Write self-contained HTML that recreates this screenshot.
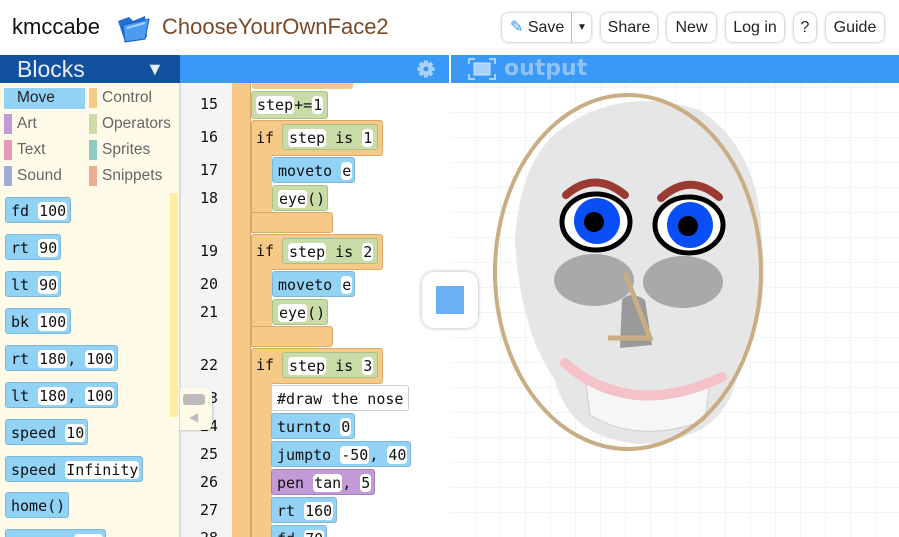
<!DOCTYPE html>
<html style="width:899px;height:537px;overflow:hidden"><head><meta charset="utf-8"><style>
*{margin:0;padding:0;box-sizing:border-box}
body{width:899px;height:537px;overflow:hidden;background:#fff;font-family:"Liberation Sans",sans-serif;position:relative}
.a{position:absolute}
.btn{position:absolute;top:13px;height:29px;border-radius:7px;background:#fff;box-shadow:0 0 3px rgba(0,0,0,.35);font-size:16px;color:#222;line-height:29px;text-align:center}
.m{font-family:"DejaVu Sans Mono","Liberation Mono",monospace;font-size:15px;color:#111}
.blk{position:absolute;height:26px;border-radius:3px;line-height:26px;padding-left:5px;white-space:nowrap}
.bl{background:#91d2f5;border:1px solid #7bb6d6}
.gr{background:#c9dba6;border:1px solid #abbf86}
.or{background:#f7c987;border:1px solid #d9aa66}
.pu{background:#c29bd6;border:1px solid #a47dbb}
.wh{background:#fff;border:1px solid #ccc}
.i{background:#fff;border-radius:4px;padding:0 1px}
.ln{position:absolute;left:180px;width:38px;text-align:right}
.cat{position:absolute;font-size:15.5px;color:#666;height:20px;line-height:20px}
.sw{position:absolute;width:8px;height:20px}
</style></head><body>
<div class="a" style="left:12px;top:14px;font-size:22px;color:#111">kmccabe</div>
<svg class="a" style="left:115px;top:11px" width="36" height="32" viewBox="0 0 36 32"><path d="M3 10 L14 6 L18 10 L30 5 L32 26 L10 31 Z" fill="#1f6fd6"/><path d="M8 14 L34 8 L30 28 L10 31 Z" fill="#4d9bf0" stroke="#1a5cb8" stroke-width="1"/><path d="M12 17 L30 12" stroke="#a9d4ff" stroke-width="2"/></svg>
<div class="a" style="left:162px;top:14px;font-size:22px;color:#7a4a28">ChooseYourOwnFace2</div>
<div class="btn" style="left:502px;width:89px;text-align:left;padding-left:8px"><span style="color:#3d8fe8">✎</span> Save<span class="a" style="left:69px;top:0;width:1px;height:29px;background:#bbb"></span><span class="a" style="left:75px;top:0;font-size:10px">▼</span></div>
<div class="btn" style="left:601px;width:56px">Share</div>
<div class="btn" style="left:667px;width:49px">New</div>
<div class="btn" style="left:726px;width:58px">Log in</div>
<div class="btn" style="left:794px;width:22px">?</div>
<div class="btn" style="left:826px;width:58px">Guide</div>

<div class="a" style="left:0;top:55px;width:180px;height:28px;background:#10509e;color:#e8eef8;font-size:23px;line-height:29px;padding-left:17px">Blocks<span class="a" style="left:146px;top:0;font-size:18px">▼</span></div>
<div class="a" style="left:180px;top:55px;width:269px;height:28px;background:#3a98f6"><svg class="a" style="left:237px;top:5px" width="18" height="18" viewBox="0 0 18 18"><g fill="#a9d2fb"><circle cx="9" cy="9" r="6.5"/><rect x="7" y="0.5" width="4" height="17"/><rect x="0.5" y="7" width="17" height="4"/><rect x="7" y="0.5" width="4" height="17" transform="rotate(45 9 9)"/><rect x="7" y="0.5" width="4" height="17" transform="rotate(-45 9 9)"/></g><circle cx="9" cy="9" r="2.5" fill="#3a98f6"/></svg></div>
<div class="a" style="left:451px;top:55px;width:448px;height:28px;background:#3a98f6"><svg class="a" style="left:17px;top:3px" width="28" height="22"><path d="M1 6V1h6M21 1h6v5M27 16v5h-6M7 21H1v-5" fill="none" stroke="#a9d2fb" stroke-width="2"/><rect x="6" y="5" width="16" height="12" fill="#a9d2fb" stroke="#d0e6fd"/></svg><span class="a" style="left:53px;top:0;font-size:22px;font-weight:bold;color:#8fc3f5;font-family:'DejaVu Sans',sans-serif;line-height:27px">output</span></div>

<div class="a" style="left:0;top:83px;width:180px;height:454px;background:#fffbe8;border-right:1px solid #ddd"></div>
<div class="a" style="left:4px;top:88px;width:81px;height:21px;background:#91d2f5"></div>
<div class="cat" style="left:17px;top:88px;color:#222">Move</div>
<div class="sw" style="left:89px;top:88px;background:#f7c987"></div><div class="cat" style="left:102px;top:88px">Control</div>
<div class="sw" style="left:4px;top:114px;background:#c29bd6"></div><div class="cat" style="left:17px;top:114px">Art</div>
<div class="sw" style="left:89px;top:114px;background:#c9dba6"></div><div class="cat" style="left:102px;top:114px">Operators</div>
<div class="sw" style="left:4px;top:140px;background:#e79ab8"></div><div class="cat" style="left:17px;top:140px">Text</div>
<div class="sw" style="left:89px;top:140px;background:#8fccc4"></div><div class="cat" style="left:102px;top:140px">Sprites</div>
<div class="sw" style="left:4px;top:166px;background:#9fabd6"></div><div class="cat" style="left:17px;top:166px">Sound</div>
<div class="sw" style="left:89px;top:166px;background:#f1ad94"></div><div class="cat" style="left:102px;top:166px">Snippets</div>
<div class="a" style="left:170px;top:193px;width:8px;height:224px;background:#ffeea0"></div>
<div class="m">
<div class="blk bl" style="left:5px;top:197px;width:66px">fd <span class="i">100</span></div>
<div class="blk bl" style="left:5px;top:234px;width:56px">rt <span class="i">90</span></div>
<div class="blk bl" style="left:5px;top:271px;width:56px">lt <span class="i">90</span></div>
<div class="blk bl" style="left:5px;top:308px;width:66px">bk <span class="i">100</span></div>
<div class="blk bl" style="left:5px;top:345px;width:113px">rt <span class="i">180</span>, <span class="i">100</span></div>
<div class="blk bl" style="left:5px;top:382px;width:113px">lt <span class="i">180</span>, <span class="i">100</span></div>
<div class="blk bl" style="left:5px;top:419px;width:83px">speed <span class="i">10</span></div>
<div class="blk bl" style="left:5px;top:456px;width:138px">speed <span class="i">Infinity</span></div>
<div class="blk bl" style="left:5px;top:492px;width:64px">home()</div>
<div class="blk bl" style="left:5px;top:529px;width:101px">turnto <span class="i">270</span></div>
</div>

<div class="a" style="left:180px;top:83px;width:52px;height:454px;background:#f4f4f4;border-left:1px solid #ddd"></div>
<div class="a" style="left:232px;top:83px;width:19px;height:454px;background:#f7c987;border-right:1px solid #d9aa66"></div>
<div class="a" style="left:252px;top:83px;width:101px;height:6px;background:#f7c987;border-radius:0 0 3px 3px"></div>
<div class="m">
<div class="ln" style="top:95px">15</div><div class="ln" style="top:128px">16</div><div class="ln" style="top:161px">17</div><div class="ln" style="top:189px">18</div>
<div class="ln" style="top:242px">19</div><div class="ln" style="top:275px">20</div><div class="ln" style="top:303px">21</div><div class="ln" style="top:356px">22</div>
<div class="ln" style="top:389px">23</div><div class="ln" style="top:417px">24</div><div class="ln" style="top:445px">25</div><div class="ln" style="top:473px">26</div><div class="ln" style="top:501px">27</div><div class="ln" style="top:529px">28</div>

<div class="blk gr" style="left:251px;top:91px;width:77px;height:28px;line-height:26px;padding-left:4px"><span class="i">step</span>+=<span class="i">1</span></div>

<div class="a or" style="left:251px;top:120px;width:132px;height:36px;border-radius:3px"></div>
<div class="a or" style="left:251px;top:150px;width:21px;height:66px;border-width:0 0 0 1px"></div>
<div class="a or" style="left:251px;top:212px;width:82px;height:21px;border-radius:0 3px 3px 0"></div>
<div class="a" style="left:256px;top:125px;line-height:26px">if</div>
<div class="blk gr" style="left:282px;top:124px;width:96px"><span class="i">step</span> is <span class="i">1</span></div>
<div class="blk bl" style="left:272px;top:157px;width:83px">moveto <span class="i">e</span></div>
<div class="blk gr" style="left:272px;top:185px;width:56px"><span class="i">eye</span>()</div>

<div class="a or" style="left:251px;top:234px;width:132px;height:36px;border-radius:3px"></div>
<div class="a or" style="left:251px;top:264px;width:21px;height:66px;border-width:0 0 0 1px"></div>
<div class="a or" style="left:251px;top:326px;width:82px;height:21px;border-radius:0 3px 3px 0"></div>
<div class="a" style="left:256px;top:238px;line-height:26px">if</div>
<div class="blk gr" style="left:282px;top:238px;width:96px"><span class="i">step</span> is <span class="i">2</span></div>
<div class="blk bl" style="left:272px;top:271px;width:83px">moveto <span class="i">e</span></div>
<div class="blk gr" style="left:272px;top:299px;width:56px"><span class="i">eye</span>()</div>

<div class="a or" style="left:251px;top:348px;width:132px;height:36px;border-radius:3px"></div>
<div class="a or" style="left:251px;top:378px;width:21px;height:159px;border-width:0 0 0 1px"></div>
<div class="a" style="left:256px;top:352px;line-height:26px">if</div>
<div class="blk gr" style="left:282px;top:352px;width:96px"><span class="i">step</span> is <span class="i">3</span></div>
<div class="blk wh" style="left:271px;top:385px;width:138px">#draw the nose</div>
<div class="blk bl" style="left:271px;top:413px;width:84px">turnto <span class="i">0</span></div>
<div class="blk bl" style="left:271px;top:441px;width:140px">jumpto <span class="i">-50</span>, <span class="i">40</span></div>
<div class="blk pu" style="left:271px;top:469px;width:104px">pen <span class="i">tan</span>, <span class="i">5</span></div>
<div class="blk bl" style="left:271px;top:497px;width:66px">rt <span class="i">160</span></div>
<div class="blk bl" style="left:271px;top:525px;width:56px">fd <span class="i">70</span></div>
</div>
<div class="a" style="left:180px;top:388px;width:32px;height:42px;background:#fffbe8;border-radius:0 6px 6px 0;box-shadow:1px 1px 2px rgba(0,0,0,.2)"><div class="a" style="left:3px;top:6px;width:22px;height:11px;background:#bbb;border-radius:3px"></div><div class="a" style="left:9px;top:22px;color:#bbb;font-size:12px">◀</div></div>

<svg class="a" style="left:451px;top:83px" width="448" height="454">
<defs><pattern id="g" width="25" height="25" patternUnits="userSpaceOnUse" x="0" y="5"><path d="M25 0V25M0 25H25" fill="none" stroke="#dcefe7" stroke-width="1"/></pattern></defs>
<rect width="448" height="454" fill="#fff"/><rect width="448" height="454" fill="url(#g)"/>
<g transform="translate(-451,-83)">
<path d="M560 130 Q620 85 700 110 Q760 150 762 240 Q770 320 740 360 Q735 410 700 430 Q650 455 600 435 Q565 420 555 380 Q520 330 515 240 Q520 160 560 130Z" fill="#e2e2e2" opacity=".85"/>
<ellipse cx="594" cy="280" rx="40" ry="26" fill="#a9a9a9"/><ellipse cx="683" cy="282" rx="40" ry="26" fill="#a9a9a9"/>
<path d="M622 300 Q630 290 645 300 L652 345 L620 348Z" fill="#9a9a9a"/>
<path d="M585 375 Q640 420 710 380 L705 420 Q640 445 590 415Z" fill="#f6f6f6" stroke="#cfcfcf"/>
<ellipse cx="628" cy="272" rx="133" ry="177" fill="none" stroke="#c8ad85" stroke-width="4"/>
<path d="M566 195 Q595 170 625 195" fill="none" stroke="#9b3a32" stroke-width="8" stroke-linecap="round"/>
<path d="M661 198 Q690 172 719 197" fill="none" stroke="#9b3a32" stroke-width="8" stroke-linecap="round"/>
<ellipse cx="596" cy="222" rx="34" ry="28" fill="#fff" stroke="#000" stroke-width="5"/>
<circle cx="597" cy="221" r="23" fill="#0a4ff5"/><circle cx="594" cy="222" r="10" fill="#000"/>
<ellipse cx="689" cy="225" rx="34" ry="28" fill="#fff" stroke="#000" stroke-width="5"/>
<circle cx="690" cy="225" r="23" fill="#0a4ff5"/><circle cx="688" cy="226" r="10" fill="#000"/>
<path d="M625 273 L650 338 L608 338" fill="none" stroke="#c8ad85" stroke-width="5"/>
<path d="M565 363 Q630 420 722 377" fill="none" stroke="#f5c2ca" stroke-width="10" stroke-linecap="round"/>
</g></svg>
<div class="a" style="left:422px;top:272px;width:56px;height:56px;background:#fff;border-radius:12px;box-shadow:0 0 4px rgba(0,0,0,.3)"><div class="a" style="left:14px;top:14px;width:28px;height:28px;background:#6ab0f5"></div></div>
</body></html>
